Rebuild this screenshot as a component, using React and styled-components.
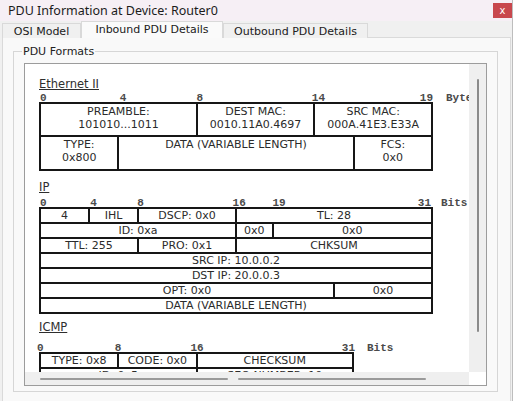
import React from "react";
import styled, { createGlobalStyle } from "styled-components";

const VERDANA = `"DejaVu Sans", Verdana, sans-serif`;
const MONO = `"Liberation Mono", "Courier New", monospace`;

const GlobalStyle = createGlobalStyle`
  html, body {
    margin: 0;
    padding: 0;
    background: #ffffff;
  }
  body {
    width: 515px;
    height: 401px;
    overflow: hidden;
  }
`;

const Screen = styled.div`
  display: flex;
  width: 515px;
  height: 401px;
  background: #ffffff;
`;

const Window = styled.div`
  box-sizing: border-box;
  width: 513px;
  height: 401px;
  border-right: 1px solid #bdbdbd;
  background: #f0f0f0;
  display: flex;
  flex-direction: column;
  font-family: ${VERDANA};
`;

const TitleBar = styled.div`
  height: 21px;
  flex: none;
  display: flex;
  align-items: center;
  justify-content: space-between;
  padding-left: 8px;
  background: #f6eff5;
`;

const TitleText = styled.span`
  font-family: "Noto Sans", "Open Sans", sans-serif;
  font-size: 12.5px;
  color: #1b1b1b;
`;

const CloseButton = styled.div`
  width: 19px;
  height: 15px;
  display: flex;
  align-items: center;
  justify-content: center;
  background: #c8474d;
  color: #ffffff;
  font-size: 10px;
  line-height: 1;
`;

const TabStrip = styled.div`
  height: 16px;
  flex: none;
  display: flex;
  align-items: flex-end;
  padding-left: 2px;
`;

const Tab = styled.div`
  box-sizing: border-box;
  width: ${(p) => p.$w}px;
  height: ${(p) => (p.$active ? 17 : 15)}px;
  margin-bottom: -1px;
  display: flex;
  align-items: center;
  justify-content: center;
  border: 1px solid #d9d9d9;
  border-bottom: none;
  background: ${(p) => (p.$active ? "#fafafa" : "#f0f0f0")};
  font-size: 11px;
  color: #202020;
  padding-bottom: ${(p) => (p.$active ? 2 : 0)}px;
  position: relative;
  z-index: ${(p) => (p.$active ? 1 : 0)};
`;

const Panel = styled.div`
  flex: 1;
  margin: 0 1px 0 2px;
  border: 1px solid #dadada;
  border-bottom: none;
  background: #f9f9f9;
  padding: 7px 0 0 10px;
`;

const GroupBox = styled.fieldset`
  box-sizing: border-box;
  width: 485px;
  margin: 0;
  border: 1px solid #d6d6d6;
  padding: 5px 0 5px 10px;
`;

const Legend = styled.legend`
  font-size: 11px;
  line-height: 13px;
  color: #222222;
  padding: 0 1px;
  margin-left: -2px;
`;

const ScrollPane = styled.div`
  box-sizing: border-box;
  width: 463px;
  height: 323px;
  border: 1px solid #9c9c9c;
  display: grid;
  grid-template-columns: 1fr 17px;
  grid-template-rows: 1fr 13px;
`;

const Viewport = styled.div`
  background: #ffffff;
  overflow: hidden;
  padding: 13px 0 0 14px;
`;

const VTrack = styled.div`
  background: #efefef;
  display: flex;
  justify-content: center;
  padding-top: 15px;
`;

const VThumb = styled.div`
  width: 2px;
  height: 253px;
  border-radius: 1px;
  background: #8a8a8a;
`;

const HTrack = styled.div`
  background: #efefef;
  display: flex;
  align-items: center;
  gap: 10px;
  padding-left: 15px;
`;

const HThumb = styled.div`
  width: 188px;
  height: 2px;
  border-radius: 1px;
  background: #9a9a9a;
`;

const Corner = styled.div`
  background: #ffffff;
`;

const Section = styled.div`
  margin-top: ${(p) => p.$top}px;
`;

const Heading = styled.div`
  font-size: 11.5px;
  line-height: 14px;
  color: #2e2e2e;
  text-decoration: underline;
`;

const RulerRow = styled.div`
  display: flex;
  margin-top: ${(p) => p.$gap}px;
  height: 10px;
  font-family: ${MONO};
  font-weight: bold;
  font-size: 11px;
  line-height: 13px;
  color: #4a4a4a;
  white-space: nowrap;
`;

const Ruler = styled.div`
  flex: none;
  width: ${(p) => p.$w}px;
  display: grid;
  grid-template-columns: repeat(${(p) => p.$cols}, 1fr);
  grid-template-rows: 10px;
`;

const Tick = styled.span`
  grid-row: 1;
  grid-column: ${(p) => p.$col} / span 1;
  margin-left: ${(p) => p.$shift}px;
`;

const LastTick = styled.span`
  grid-row: 1;
  grid-column: ${(p) => p.$cols - 3} / span 4;
  text-align: right;
  margin-right: ${(p) => p.$shift}px;
`;

const Unit = styled.span`
  flex: none;
  margin-left: ${(p) => p.$gap}px;
`;

const Table = styled.div`
  box-sizing: border-box;
  width: ${(p) => p.$w}px;
  display: grid;
  grid-template-columns: repeat(${(p) => p.$cols}, 1fr);
  grid-template-rows: ${(p) => p.$rows};
  gap: 2px;
  padding: 2px;
  background: #161616;
`;

const Cell = styled.div`
  grid-column: span ${(p) => p.$span};
  background: #ffffff;
  display: flex;
  justify-content: center;
  align-items: flex-start;
  padding-top: ${(p) => p.$pad}px;
  font-size: 11px;
  line-height: 13px;
  color: #2b2b2b;
  text-align: center;
  white-space: pre-line;
  overflow: hidden;
`;

const sections = [
  {
    title: "Ethernet II",
    top: 0,
    rulerGap: 1,
    cols: 20,
    width: 394,
    rows: "31px 32px",
    pad: 1,
    ticks: [[0, 1], [4, 2], [8, 0], [14, -3]],
    last: "19",
    lastShift: 0,
    unit: "Bytes",
    unitGap: 13,
    cells: [
      [8, "PREAMBLE:\n101010...1011"],
      [6, "DEST MAC:\n0010.11A0.4697"],
      [6, "SRC MAC:\n000A.41E3.E33A"],
      [4, "TYPE:\n0x800"],
      [12, "DATA (VARIABLE LENGTH)"],
      [4, "FCS:\n0x0"],
    ],
  },
  {
    title: "IP",
    top: 9,
    rulerGap: 3,
    cols: 32,
    width: 394,
    rows: "repeat(7, 13px)",
    pad: 0,
    ticks: [[0, 1], [4, 2], [8, 0], [16, -3], [19, 0]],
    last: "31",
    lastShift: 2,
    unit: "Bits",
    unitGap: 8,
    cells: [
      [4, "4"],
      [4, "IHL"],
      [8, "DSCP: 0x0"],
      [16, "TL: 28"],
      [16, "ID: 0xa"],
      [3, "0x0"],
      [13, "0x0"],
      [8, "TTL: 255"],
      [8, "PRO: 0x1"],
      [16, "CHKSUM"],
      [32, "SRC IP: 10.0.0.2"],
      [32, "DST IP: 20.0.0.3"],
      [24, "OPT: 0x0"],
      [8, "0x0"],
      [32, "DATA (VARIABLE LENGTH)"],
    ],
  },
  {
    title: "ICMP",
    top: 6,
    rulerGap: 8,
    cols: 32,
    width: 315,
    rows: "repeat(2, 13px)",
    pad: 0,
    ticks: [[0, -2], [8, -3], [16, -6]],
    last: "31",
    lastShift: -1,
    unit: "Bits",
    unitGap: 13,
    cells: [
      [8, "TYPE: 0x8"],
      [8, "CODE: 0x0"],
      [16, "CHECKSUM"],
      [16, "ID: 0x5"],
      [16, "SEQ NUMBER: 10"],
    ],
  },
];

const tabs = [
  { label: "OSI Model", w: 79 },
  { label: "Inbound PDU Details", w: 142, active: true },
  { label: "Outbound PDU Details", w: 145 },
];

const PduSection = ({ s }) => (
  <Section $top={s.top}>
    <Heading>{s.title}</Heading>
    <RulerRow $gap={s.rulerGap}>
      <Ruler $w={s.width} $cols={s.cols}>
        {s.ticks.map(([bit, shift]) => (
          <Tick key={bit} $col={bit + 1} $shift={shift}>
            {bit}
          </Tick>
        ))}
        <LastTick $cols={s.cols} $shift={s.lastShift}>
          {s.last}
        </LastTick>
      </Ruler>
      <Unit $gap={s.unitGap}>{s.unit}</Unit>
    </RulerRow>
    <Table $w={s.width} $cols={s.cols} $rows={s.rows}>
      {s.cells.map(([span, text], i) => (
        <Cell key={i} $span={span} $pad={s.pad}>
          {text}
        </Cell>
      ))}
    </Table>
  </Section>
);

const App = () => (
  <Screen>
    <GlobalStyle />
    <Window>
      <TitleBar>
        <TitleText>PDU Information at Device: Router0</TitleText>
        <CloseButton>x</CloseButton>
      </TitleBar>
      <TabStrip>
        {tabs.map((t) => (
          <Tab key={t.label} $w={t.w} $active={t.active}>
            {t.label}
          </Tab>
        ))}
      </TabStrip>
      <Panel>
        <GroupBox>
          <Legend>PDU Formats</Legend>
          <ScrollPane>
            <Viewport>
              {sections.map((s) => (
                <PduSection key={s.title} s={s} />
              ))}
            </Viewport>
            <VTrack>
              <VThumb />
            </VTrack>
            <HTrack>
              <HThumb />
              <HThumb />
            </HTrack>
            <Corner />
          </ScrollPane>
        </GroupBox>
      </Panel>
    </Window>
  </Screen>
);

export default App;
